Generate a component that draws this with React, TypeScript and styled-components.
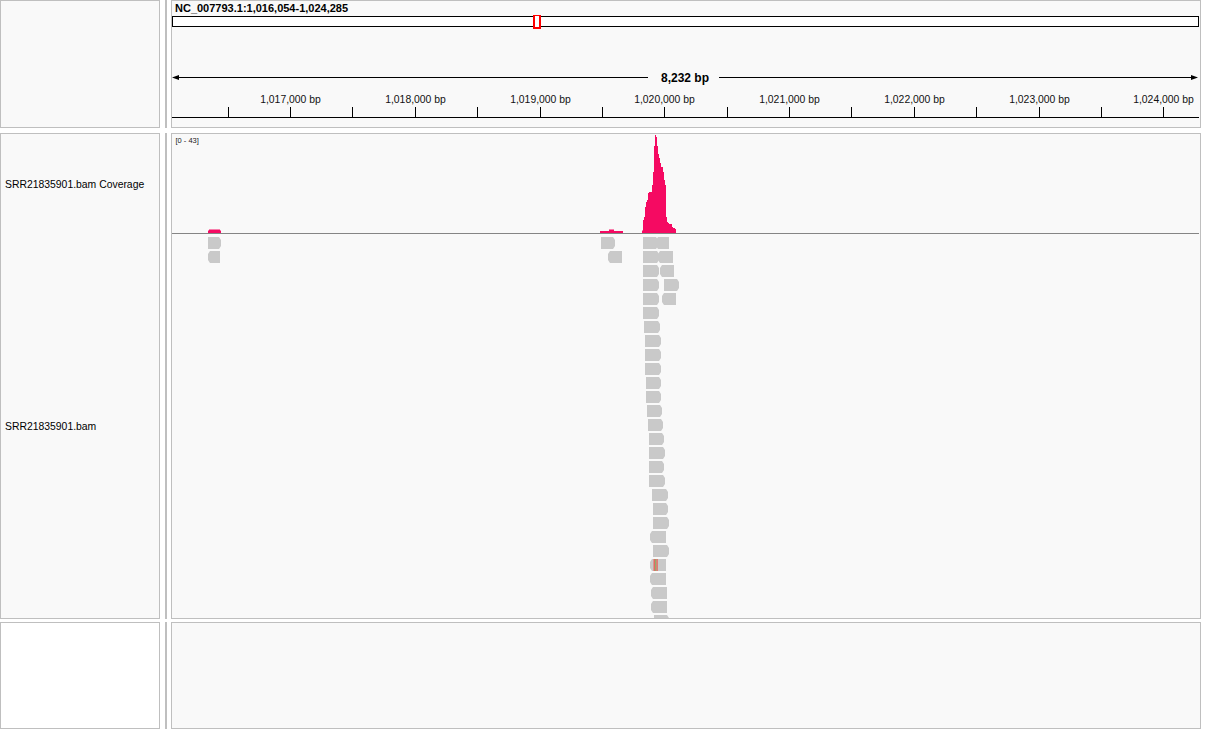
import React from 'react';
import styled, { createGlobalStyle } from 'styled-components';

const GlobalStyle = createGlobalStyle`
  html, body { margin: 0; padding: 0; background: #ffffff; }
  body { font-family: "Liberation Sans", Arial, sans-serif; color: #000; }
`;

const BORDER = '#bfbfbf';
const PANEL_BG = '#f9f9f9';
const COVERAGE = '#f50a62';
const READ = '#c9c9c9';

const Page = styled.div`
  display: flex;
  flex-direction: column;
  width: 1217px;
`;

const Row = styled.div<{ $h: number; $gap: number }>`
  display: flex;
  height: ${(p) => p.$h}px;
  margin-top: ${(p) => p.$gap}px;
`;

const NamePanel = styled.div<{ $bg?: string }>`
  width: 160px;
  box-sizing: border-box;
  border: 1px solid ${BORDER};
  background: ${(p) => p.$bg ?? PANEL_BG};
  display: flex;
  flex-direction: column;
`;

const Divider = styled.div`
  width: 2px;
  margin: 0 4px 0 5px;
  background: ${BORDER};
`;

const DataPanel = styled.div`
  width: 1030px;
  box-sizing: border-box;
  border: 1px solid ${BORDER};
  background: ${PANEL_BG};
  overflow: hidden;
  display: flex;
  flex-direction: column;
`;

const TrackName = styled.div<{ $h?: number }>`
  display: flex;
  align-items: center;
  padding-left: 4px;
  font-size: 10.4px;
  ${(p) => (p.$h ? `height: ${p.$h}px;` : 'flex: 1;')}
`;

const Locus = styled.div`
  font-weight: bold;
  font-size: 11px;
  line-height: 13px;
  padding: 1px 0 0 3px;
  height: 13px;
`;

const Canvas = styled.svg`
  display: block;
  flex: none;
  font-family: "Liberation Sans", Arial, sans-serif;
`;

const START = 1016054;
const PX_PER_BP = 1027 / 8232;
const bpX = (bp: number) => 172 + (bp - START) * PX_PER_BP;

const ticks: number[] = [];
for (let bp = 1016500; bp <= 1024000; bp += 500) ticks.push(bp);

const fmt = (n: number) => n.toLocaleString('en-US');

function Ruler() {
  return (
    <Canvas width={1028} height={112} viewBox="172 15 1028 112">
      {/* ideogram */}
      <rect x={172.5} y={16.5} width={1026} height={10} fill="#fff" stroke="#000" strokeWidth={1} />
      <rect x={534} y={15} width={6} height={13} fill="#fff" stroke="#ff0000" strokeWidth={2} />
      {/* span line */}
      <line x1={175} y1={77.5} x2={648} y2={77.5} stroke="#000" strokeWidth={1} />
      <line x1={719} y1={77.5} x2={1195} y2={77.5} stroke="#000" strokeWidth={1} />
      <polygon points="172,77.5 179,75 179,80" fill="#000" />
      <polygon points="1198,77.5 1191,75 1191,80" fill="#000" />
      <text x={685} y={82} textAnchor="middle" fontSize={12} fontWeight="bold" fill="#000">
        8,232 bp
      </text>
      {/* ticks */}
      {ticks.map((bp) => {
        const x = Math.round(bpX(bp)) + 0.5;
        return (
          <g key={bp}>
            <line x1={x} y1={107} x2={x} y2={117} stroke="#000" strokeWidth={1} />
            {bp % 1000 === 0 && (
              <text x={x} y={103} textAnchor="middle" fontSize={10.4} fill="#111">
                {fmt(bp)} bp
              </text>
            )}
          </g>
        );
      })}
      <line x1={172} y1={117.5} x2={1199} y2={117.5} stroke="#000" strokeWidth={1} />
    </Canvas>
  );
}

const coverage: [number, number][] = [
  [208, 230.5], [209, 229.5], [210, 229.5], [211, 229.5], [212, 229.5], [213, 229.5], [214, 229.5],
  [215, 229.5], [216, 229.5], [217, 229.5], [218, 229.5], [219, 229.5], [220, 230.5],
  [600, 231], [601, 231], [602, 231], [603, 231], [604, 231], [605, 231], [606, 231], [607, 231],
  [608, 231], [609, 229.5], [610, 229.5], [611, 229.5], [612, 229.5], [613, 229.5], [614, 231],
  [615, 231], [616, 231], [617, 231], [618, 231], [619, 231], [620, 231], [621, 231], [622, 231],
  [642, 230.5], [643, 220], [644, 217], [645, 207], [646, 202], [647, 200], [648, 193], [649, 192],
  [650, 192], [651, 192], [652, 185], [653, 172], [654, 146], [655, 135], [656, 137], [657, 146],
  [658, 154], [659, 158], [660, 163], [661, 167], [662, 167], [663, 172], [664, 180], [665, 185],
  [666, 217], [667, 222], [668, 223], [669, 224], [670, 224], [671, 224], [672, 227], [673, 228],
  [674, 228], [675, 229],
];

type Dir = 'R' | 'L';
type Read = [number, number, Dir];

const rows: Read[][] = [
  [[208, 219, 'R'], [601, 613, 'R'], [643, 656, 'R'], [658, 669, 'L']],
  [[210, 220, 'L'], [610, 622, 'L'], [643, 657, 'R'], [660, 673, 'L']],
  [[643, 657, 'R'], [662, 674, 'L']],
  [[643, 657, 'R'], [664, 677, 'R']],
  [[643, 657, 'R'], [664, 676, 'L']],
  [[643, 657, 'R']],
  [[644, 658, 'R']],
  [[645, 659, 'R']],
  [[645, 659, 'R']],
  [[645, 659, 'R']],
  [[646, 659, 'R']],
  [[646, 659, 'R']],
  [[647, 660, 'R']],
  [[648, 661, 'R']],
  [[649, 662, 'R']],
  [[649, 663, 'R']],
  [[649, 662, 'R']],
  [[649, 663, 'R']],
  [[652, 666, 'R']],
  [[653, 666, 'R']],
  [[653, 667, 'R']],
  [[652, 666, 'L']],
  [[653, 667, 'R']],
  [[652, 666, 'L']],
  [[652, 666, 'L']],
  [[653, 667, 'L']],
  [[653, 667, 'L']],
  [[654, 667, 'R']],
];

const READ_H = 12;
const ROW_TOP = 237;
const ROW_STEP = 14;

function readPoints(x0: number, x1: number, y: number, dir: Dir) {
  const h = READ_H;
  if (dir === 'R') {
    return `${x0},${y} ${x1},${y} ${x1 + 2},${y + 3} ${x1 + 2},${y + h - 3} ${x1},${y + h} ${x0},${y + h}`;
  }
  return `${x0},${y} ${x1},${y} ${x1},${y + h} ${x0},${y + h} ${x0 - 2},${y + h - 3} ${x0 - 2},${y + 3}`;
}

function Alignments() {
  return (
    <Canvas width={1028} height={484} viewBox="172 134 1028 484">
      <text x={175.5} y={143} fontSize={7.5} fill="#222">
        [0 - 43]
      </text>
      {coverage.map(([x, top]) => (
        <rect key={x} x={x} y={top} width={1} height={233 - top} fill={COVERAGE} />
      ))}
      <line x1={172} y1={233.5} x2={1199} y2={233.5} stroke="#858585" strokeWidth={1} />
      {rows.map((reads, i) => {
        const y = ROW_TOP + i * ROW_STEP;
        return (
          <g key={i}>
            {reads.map(([x0, x1, d]) => (
              <polygon key={x0} points={readPoints(x0, x1, y, d)} fill={READ} />
            ))}
          </g>
        );
      })}
      {/* mismatch on one read */}
      <rect x={653.5} y={559} width={1.5} height={12} fill="#e26a62" />
      <rect x={655} y={559} width={1.3} height={12} fill="#8fae6c" />
      <rect x={656.3} y={559} width={1.5} height={12} fill="#e26a62" />
    </Canvas>
  );
}

export default function App() {
  return (
    <>
      <GlobalStyle />
      <Page>
        <Row $h={128} $gap={0}>
          <NamePanel />
          <Divider />
          <DataPanel>
            <Locus>NC_007793.1:1,016,054-1,024,285</Locus>
            <Ruler />
          </DataPanel>
        </Row>
        <Row $h={486} $gap={5}>
          <NamePanel>
            <TrackName $h={100}>SRR21835901.bam Coverage</TrackName>
            <TrackName>SRR21835901.bam</TrackName>
          </NamePanel>
          <Divider />
          <DataPanel>
            <Alignments />
          </DataPanel>
        </Row>
        <Row $h={107} $gap={3}>
          <NamePanel $bg="#ffffff" />
          <Divider />
          <DataPanel />
        </Row>
      </Page>
    </>
  );
}
